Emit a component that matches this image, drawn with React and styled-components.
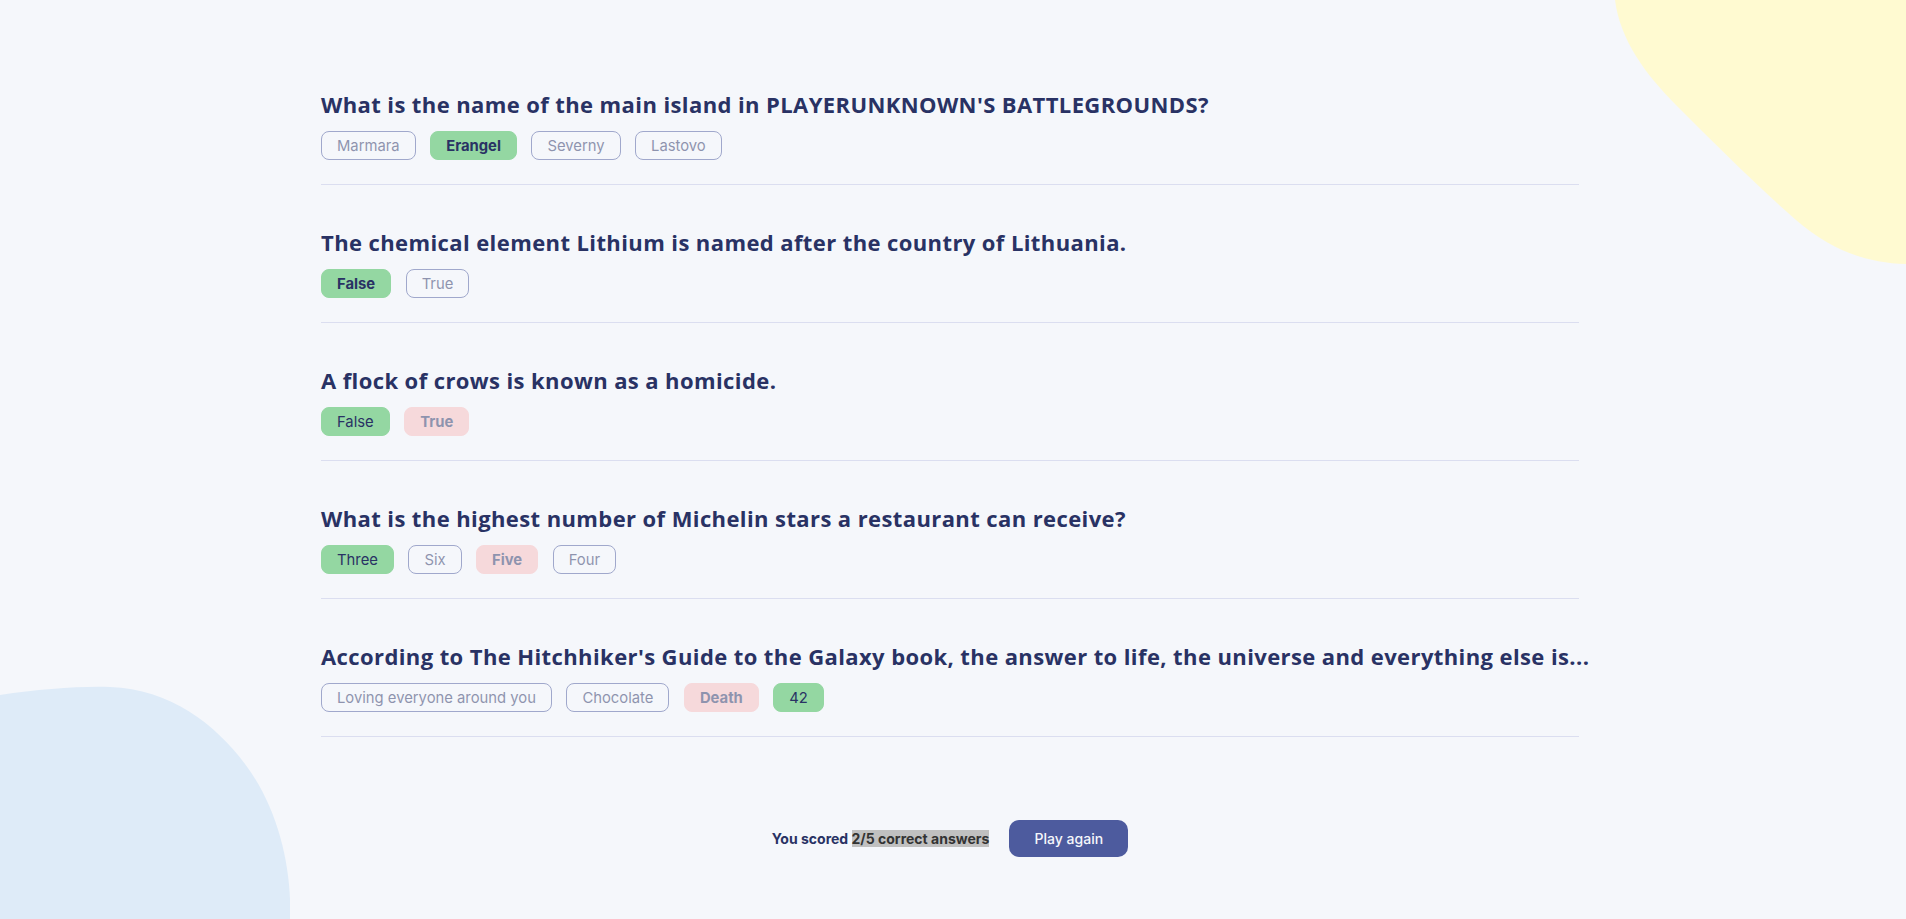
import React from 'react';
import styled, { createGlobalStyle, css } from 'styled-components';

const GlobalStyle = createGlobalStyle`
  html, body {
    margin: 0;
    padding: 0;
    background: #f5f7fb;
  }
  * {
    box-sizing: border-box;
  }
`;

const Page = styled.div`
  position: relative;
  min-height: 100vh;
  overflow: hidden;
  background: #f5f7fb;
  font-family: Inter, "Liberation Sans", sans-serif;
  color: #293264;
`;

const BlobTop = styled.svg`
  position: absolute;
  top: 0;
  right: 0;
  width: 300px;
  height: 270px;
`;

const BlobBottom = styled.svg`
  position: absolute;
  left: 0;
  bottom: 0;
  width: 295px;
  height: 235px;
`;

const Quiz = styled.main`
  position: relative;
  width: 1258px;
  margin-left: calc(50% - 632px);
  padding-top: 47px;
  display: flex;
  flex-direction: column;
`;

const Question = styled.section`
  padding: 43px 0 24px;
  border-bottom: 1px solid #dbdef0;
  display: flex;
  flex-direction: column;
  gap: 12px;
`;

const Title = styled.h2`
  margin: 0;
  font-family: "Open Sans", "Liberation Sans", sans-serif;
  font-size: 22px;
  line-height: 29px;
  font-weight: 700;
  letter-spacing: 0.4px;
  color: #293264;
  white-space: nowrap;
`;

const Answers = styled.div`
  display: flex;
  gap: 14.5px;
`;

const Answer = styled.span`
  height: 29px;
  padding: 0 15px;
  display: inline-flex;
  align-items: center;
  border-radius: 8px;
  font-size: 14.8px;
  color: #293264;
  border: 1px solid #4d5b9e;
  font-weight: ${(p) => (p.$selected ? 700 : 400)};

  ${(p) =>
    p.$state === 'correct' &&
    css`
      background: #94d7a2;
      border-color: #94d7a2;
    `}

  ${(p) =>
    p.$state === 'wrong' &&
    css`
      background: #f8bcbc;
      border-color: #f8bcbc;
      opacity: 0.5;
    `}

  ${(p) =>
    p.$state === 'idle' &&
    css`
      opacity: 0.5;
    `}
`;

const Footer = styled.footer`
  margin-top: 83px;
  display: flex;
  justify-content: center;
  align-items: center;
  gap: 20px;
`;

const Score = styled.p`
  margin: 0;
  font-size: 14px;
  font-weight: 700;
  color: #293264;
`;

const Highlight = styled.span`
  background: #c0c0c0;
  color: #333333;
`;

const PlayButton = styled.button`
  width: 119px;
  height: 37px;
  border: none;
  border-radius: 10px;
  background: #4d5b9e;
  color: #f5f7fb;
  font-family: Inter, "Liberation Sans", sans-serif;
  font-size: 14px;
  font-weight: 500;
  cursor: pointer;
`;

const questions = [
  {
    q: "What is the name of the main island in PLAYERUNKNOWN'S BATTLEGROUNDS?",
    answers: ['Marmara', 'Erangel', 'Severny', 'Lastovo'],
    correct: 'Erangel',
    picked: 'Erangel',
  },
  {
    q: 'The chemical element Lithium is named after the country of Lithuania.',
    answers: ['False', 'True'],
    correct: 'False',
    picked: 'False',
  },
  {
    q: 'A flock of crows is known as a homicide.',
    answers: ['False', 'True'],
    correct: 'False',
    picked: 'True',
  },
  {
    q: 'What is the highest number of Michelin stars a restaurant can receive?',
    answers: ['Three', 'Six', 'Five', 'Four'],
    correct: 'Three',
    picked: 'Five',
  },
  {
    q: "According to The Hitchhiker's Guide to the Galaxy book, the answer to life, the universe and everything else is...",
    answers: ['Loving everyone around you', 'Chocolate', 'Death', '42'],
    correct: '42',
    picked: 'Death',
  },
];

const stateOf = (item, answer) => {
  if (answer === item.correct) return 'correct';
  if (answer === item.picked) return 'wrong';
  return 'idle';
};

const App = () => {
  const score = questions.filter((item) => item.picked === item.correct).length;

  return (
    <Page>
      <GlobalStyle />
      <BlobTop viewBox="0 0 300 270" aria-hidden="true">
        <path
          d="M9 0 C14 40 40 75 70 105 C110 145 150 185 190 220 C225 250 260 263 300 264 L300 0 Z"
          fill="#fffad1"
        />
      </BlobTop>
      <BlobBottom viewBox="0 0 295 235" aria-hidden="true">
        <path
          d="M0 11 C40 5 80 2 110 3 C170 5 215 40 245 80 C275 120 288 170 290 215 L290 235 L0 235 Z"
          fill="#deebf8"
        />
      </BlobBottom>

      <Quiz>
        {questions.map((item, i) => (
          <Question key={i}>
            <Title>{item.q}</Title>
            <Answers>
              {item.answers.map((answer) => (
                <Answer
                  key={answer}
                  $state={stateOf(item, answer)}
                  $selected={answer === item.picked}
                >
                  {answer}
                </Answer>
              ))}
            </Answers>
          </Question>
        ))}

        <Footer>
          <Score>
            You scored <Highlight>{score}/{questions.length} correct answers</Highlight>
          </Score>
          <PlayButton>Play again</PlayButton>
        </Footer>
      </Quiz>
    </Page>
  );
};

export default App;
